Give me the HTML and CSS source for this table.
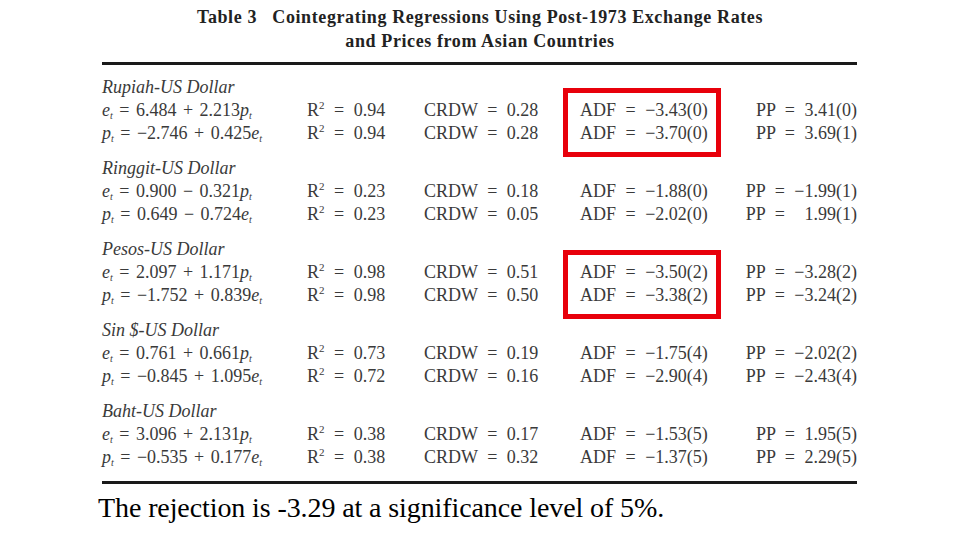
FILE: index.html
```html
<!DOCTYPE html>
<html>
<head>
<meta charset="utf-8">
<link rel="stylesheet" href="styles.css">
</head>
<body>
<div class="page">
  <h1 class="title">
    <span class="line">Table 3&nbsp;&nbsp;&nbsp;Cointegrating Regressions Using Post-1973 Exchange Rates</span>
    <span class="line">and Prices from Asian Countries</span>
  </h1>
  <div class="table">
    <div class="group">
      <div class="label">Rupiah-US Dollar</div>
      <div class="eq"><i>e<sub>t</sub></i> = 6.484 + 2.213<i>p<sub>t</sub></i></div>
      <div class="r2">R<sup>2</sup> = 0.94</div>
      <div class="crdw">CRDW = 0.28</div>
      <div class="adf hl">ADF = &minus;3.43(0)<br>ADF = &minus;3.70(0)</div>
      <div class="pp">PP = 3.41(0)</div>
      <div class="eq"><i>p<sub>t</sub></i> = &minus;2.746 + 0.425<i>e<sub>t</sub></i></div>
      <div class="r2">R<sup>2</sup> = 0.94</div>
      <div class="crdw">CRDW = 0.28</div>
      <div class="pp">PP = 3.69(1)</div>
    </div>
    <div class="group">
      <div class="label">Ringgit-US Dollar</div>
      <div class="eq"><i>e<sub>t</sub></i> = 0.900 &minus; 0.321<i>p<sub>t</sub></i></div>
      <div class="r2">R<sup>2</sup> = 0.23</div>
      <div class="crdw">CRDW = 0.18</div>
      <div class="adf">ADF = &minus;1.88(0)<br>ADF = &minus;2.02(0)</div>
      <div class="pp">PP = &minus;1.99(1)</div>
      <div class="eq"><i>p<sub>t</sub></i> = 0.649 &minus; 0.724<i>e<sub>t</sub></i></div>
      <div class="r2">R<sup>2</sup> = 0.23</div>
      <div class="crdw">CRDW = 0.05</div>
      <div class="pp">PP = <span class="ghost">&minus;</span>1.99(1)</div>
    </div>
    <div class="group">
      <div class="label">Pesos-US Dollar</div>
      <div class="eq"><i>e<sub>t</sub></i> = 2.097 + 1.171<i>p<sub>t</sub></i></div>
      <div class="r2">R<sup>2</sup> = 0.98</div>
      <div class="crdw">CRDW = 0.51</div>
      <div class="adf hl">ADF = &minus;3.50(2)<br>ADF = &minus;3.38(2)</div>
      <div class="pp">PP = &minus;3.28(2)</div>
      <div class="eq"><i>p<sub>t</sub></i> = &minus;1.752 + 0.839<i>e<sub>t</sub></i></div>
      <div class="r2">R<sup>2</sup> = 0.98</div>
      <div class="crdw">CRDW = 0.50</div>
      <div class="pp">PP = &minus;3.24(2)</div>
    </div>
    <div class="group">
      <div class="label">Sin $-US Dollar</div>
      <div class="eq"><i>e<sub>t</sub></i> = 0.761 + 0.661<i>p<sub>t</sub></i></div>
      <div class="r2">R<sup>2</sup> = 0.73</div>
      <div class="crdw">CRDW = 0.19</div>
      <div class="adf">ADF = &minus;1.75(4)<br>ADF = &minus;2.90(4)</div>
      <div class="pp">PP = &minus;2.02(2)</div>
      <div class="eq"><i>p<sub>t</sub></i> = &minus;0.845 + 1.095<i>e<sub>t</sub></i></div>
      <div class="r2">R<sup>2</sup> = 0.72</div>
      <div class="crdw">CRDW = 0.16</div>
      <div class="pp">PP = &minus;2.43(4)</div>
    </div>
    <div class="group">
      <div class="label">Baht-US Dollar</div>
      <div class="eq"><i>e<sub>t</sub></i> = 3.096 + 2.131<i>p<sub>t</sub></i></div>
      <div class="r2">R<sup>2</sup> = 0.38</div>
      <div class="crdw">CRDW = 0.17</div>
      <div class="adf">ADF = &minus;1.53(5)<br>ADF = &minus;1.37(5)</div>
      <div class="pp">PP = 1.95(5)</div>
      <div class="eq"><i>p<sub>t</sub></i> = &minus;0.535 + 0.177<i>e<sub>t</sub></i></div>
      <div class="r2">R<sup>2</sup> = 0.38</div>
      <div class="crdw">CRDW = 0.32</div>
      <div class="pp">PP = 2.29(5)</div>
    </div>
  </div>
  <p class="note">The rejection is -3.29 at a significance level of 5%.</p>
</div>
</body>
</html>
```
FILE: styles.css
```css
html, body {
  margin: 0;
  padding: 0;
  background: #ffffff;
}
.page {
  width: 960px;
  height: 540px;
  overflow: hidden;
  font-family: "Liberation Serif", "Times New Roman", serif;
}
.title {
  margin: 5px 0 0 0;
  font-size: 18px;
  font-weight: bold;
  letter-spacing: 0.6px;
  color: #222;
  line-height: 24px;
  text-align: center;
}
.title .line {
  display: block;
}
.table {
  margin: 9px 0 0 102px;
  width: 755px;
  border-top: 3px solid #1a1a1a;
  border-bottom: 3px solid #1a1a1a;
  padding: 11px 0 0 0;
  color: #3a3a3a;
  font-size: 18px;
  word-spacing: 5px;
}
.group {
  display: grid;
  grid-template-columns: 205px 117px 156px 1fr auto;
  grid-auto-rows: 23px;
  line-height: 23px;
  margin-bottom: 12px;
}
.label {
  grid-column: 1 / -1;
  font-style: italic;
  word-spacing: 0;
}
.eq {
  grid-column: 1;
  word-spacing: 2px;
}
.r2 { grid-column: 2; }
.crdw { grid-column: 3; }
.adf {
  grid-column: 4;
  grid-row: 2 / span 2;
  position: relative;
}
.pp {
  grid-column: 5;
  text-align: right;
  white-space: pre;
}
sub {
  font-size: 10px;
  vertical-align: -3px;
  line-height: 0;
}
sup {
  font-size: 11px;
  vertical-align: 7px;
  line-height: 0;
}
.ghost {
  visibility: hidden;
}
.hl::before {
  content: "";
  position: absolute;
  left: -17px;
  top: -11px;
  width: 158px;
  height: 69px;
  box-sizing: border-box;
  border: 5px solid #e8000b;
}
.note {
  margin: 8px 0 0 98px;
  font-size: 28px;
  letter-spacing: -0.1px;
  color: #000;
  line-height: 32px;
}
```
